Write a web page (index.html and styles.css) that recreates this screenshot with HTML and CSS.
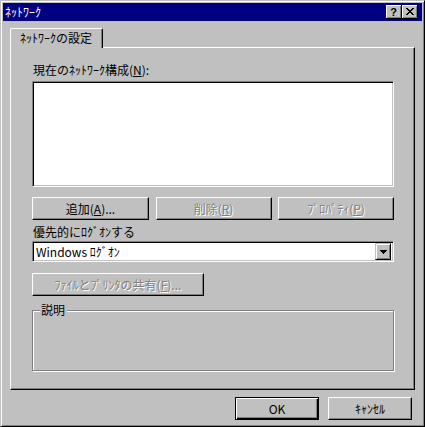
FILE: index.html
```html
<!DOCTYPE html>
<html lang="ja">
<head>
<meta charset="utf-8">
<title>ﾈｯﾄﾜｰｸ</title>
<link rel="stylesheet" href="styles.css">
</head>
<body>
<div class="window">
  <div class="titlebar">
    <span class="title">ﾈｯﾄﾜｰｸ</span>
    <span class="capbtn help">?</span>
    <span class="capbtn close">
      <svg width="8" height="7" viewBox="0 0 8 7" shape-rendering="crispEdges"><path fill="#000" d="M0 0h2v1H0zM6 0h2v1H6zM1 1h2v1H1zM5 1h2v1H5zM2 2h4v1H2zM3 3h2v1H3zM2 4h4v1H2zM1 5h2v1H1zM5 5h2v1H5zM0 6h2v1H0zM6 6h2v1H6z"/></svg>
    </span>
  </div>
  <div class="body">
    <div class="tabs">
      <div class="tab">ﾈｯﾄﾜｰｸの設定</div>
    </div>
    <div class="panel">
      <div class="label">現在のﾈｯﾄﾜｰｸ構成(<u>N</u>):</div>
      <div class="listbox"></div>
      <div class="btnrow">
        <div class="btn">追加(<u>A</u>)...</div>
        <div class="btn dis">削除(<u>R</u>)</div>
        <div class="btn dis">ﾌﾟﾛﾊﾟﾃｨ(<u>P</u>)</div>
      </div>
      <div class="label label2">優先的にﾛｸﾞｵﾝする</div>
      <div class="combo">
        <span class="combo-text">Windows ﾛｸﾞｵﾝ</span>
        <span class="drop">
          <svg width="7" height="4" viewBox="0 0 7 4" shape-rendering="crispEdges"><path fill="#000" d="M0 0h7v1H0zM1 1h5v1H1zM2 2h3v1H2zM3 3h1v1H3z"/></svg>
        </span>
      </div>
      <div class="btn dis share">ﾌｧｲﾙとﾌﾟﾘﾝﾀの共有(<u>F</u>)...</div>
      <div class="group">
        <span class="legend">説明</span>
      </div>
    </div>
    <div class="footer">
      <div class="btn default">OK</div>
      <div class="btn">ｷｬﾝｾﾙ</div>
    </div>
  </div>
</div>
</body>
</html>
```
FILE: styles.css
```css
* { box-sizing: border-box; }
html, body { margin: 0; padding: 0; background: #c0c0c0; }
body {
  font-family: "Noto Sans CJK JP", "Noto Sans", sans-serif;
  font-size: 12px;
  color: #000;
}
u { text-decoration: underline; text-underline-offset: 1px; }

.window {
  width: 425px;
  height: 427px;
  background: #c0c0c0;
  border: 1px solid;
  border-color: #c0c0c0 #000 #000 #c0c0c0;
  box-shadow: inset 1px 1px #fff, inset -1px -1px #808080;
  padding: 2px;
  display: flex;
  flex-direction: column;
}

.titlebar {
  height: 18px;
  background: #000080;
  color: #fff;
  display: flex;
  align-items: center;
  padding: 0 4px 0 2px;
}
.title { flex: 1; line-height: 18px; }
.capbtn {
  width: 16px;
  height: 14px;
  background: #c0c0c0;
  color: #000;
  box-shadow: inset -1px -1px #000, inset 1px 1px #fff, inset -2px -2px #808080;
  display: flex;
  align-items: center;
  justify-content: center;
}
.help {
  font-family: "Liberation Sans", sans-serif;
  font-weight: bold;
  font-size: 11px;
  line-height: 14px;
  padding-right: 1px;
}
.close svg { display: block; margin-left: -1px; margin-top: -1px; }

.body { padding: 7px 7px 0 7px; }

.tabs { display: flex; height: 19px; }
.tab {
  position: relative;
  z-index: 1;
  width: 93px;
  height: 20px;
  padding-left: 9px;
  background: #c0c0c0;
  border-top: 1px solid #fff;
  border-left: 1px solid #fff;
  border-right: 1px solid #000;
  border-top-left-radius: 2px;
  border-top-right-radius: 2px;
  box-shadow: inset -1px 0 #808080;
  line-height: 17px;
}

.panel {
  height: 343px;
  border: 1px solid;
  border-color: #fff #000 #000 #fff;
  box-shadow: inset -1px -1px #808080;
  padding: 14px 20px 0 21px;
}

.label { height: 16px; line-height: 16px; padding-left: 1px; }
.listbox {
  margin-top: 3px;
  height: 106px;
  background: #fff;
  border: 1px solid;
  border-color: #808080 #fff #fff #808080;
  box-shadow: inset 1px 1px #000, inset -1px -1px #c0c0c0;
}

.btn {
  height: 23px;
  background: #c0c0c0;
  border: 1px solid;
  border-color: #fff #000 #000 #fff;
  box-shadow: inset -1px -1px #808080;
  display: flex;
  align-items: center;
  justify-content: center;
  line-height: 16px;
  white-space: nowrap;
}
.btn.default {
  border-color: #000;
  box-shadow: inset 1px 1px #fff, inset -1px -1px #000, inset -2px -2px #808080;
}
.dis { color: #808080; text-shadow: 1px 1px 0 #fff; }

.btnrow {
  margin-top: 10px;
  display: grid;
  grid-template-columns: 117px 116px 116px;
  justify-content: space-between;
}

.label2 { margin-top: 4px; }

.combo {
  margin-top: 1px;
  height: 21px;
  background: #fff;
  border: 1px solid;
  border-color: #808080 #fff #fff #808080;
  box-shadow: inset 1px 1px #000, inset -1px -1px #c0c0c0;
  padding: 2px 2px 2px 3px;
  display: flex;
  align-items: center;
}
.combo-text { flex: 1; line-height: 16px; }
.drop {
  width: 16px;
  height: 17px;
  background: #c0c0c0;
  border: 1px solid;
  border-color: #c0c0c0 #000 #000 #c0c0c0;
  box-shadow: inset 1px 1px #fff, inset -1px -1px #808080;
  display: flex;
  align-items: center;
  justify-content: center;
}
.drop svg { display: block; }

.share { margin-top: 11px; width: 172px; }

.group {
  position: relative;
  margin-top: 14px;
  height: 61px;
  border: 1px solid #808080;
  box-shadow: 1px 1px 0 #fff, inset 1px 1px 0 #fff;
}
.legend {
  position: absolute;
  left: 7px;
  top: -9px;
  padding: 0 2px 0 1px;
  background: #c0c0c0;
  line-height: 16px;
}

.footer {
  margin-top: 7px;
  display: flex;
  justify-content: flex-end;
  gap: 9px;
  padding-right: 3px;
}
.footer .btn { width: 84px; }
```
